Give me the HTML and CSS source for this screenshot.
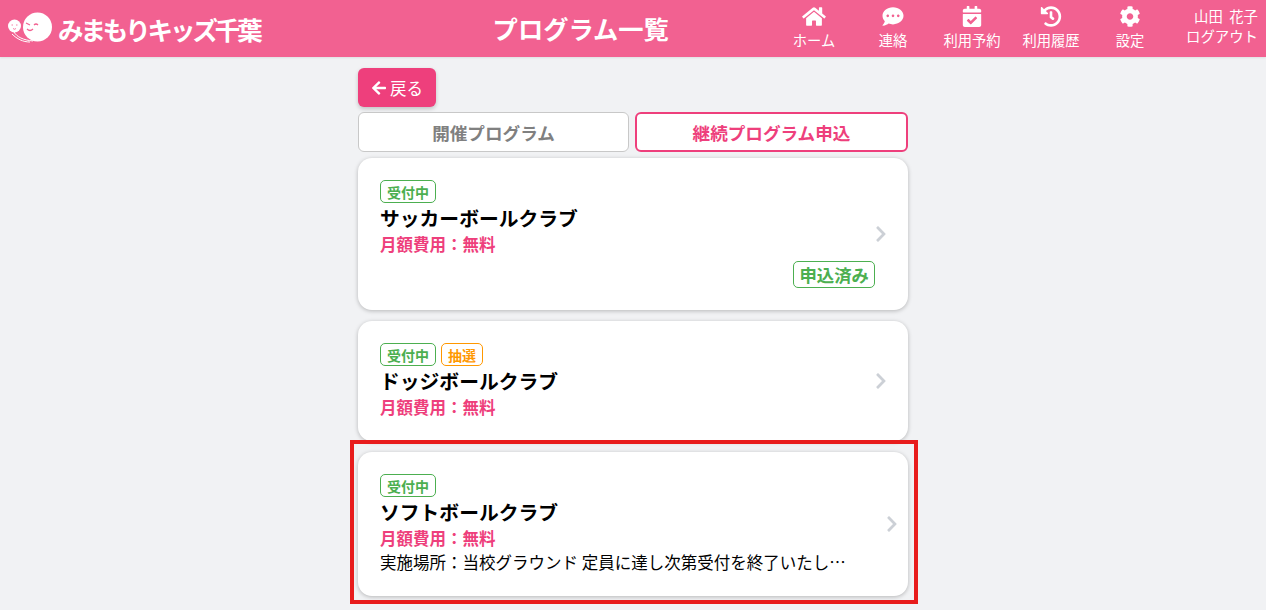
FILE: index.html
```html
<!DOCTYPE html>
<html lang="ja">
<head>
<meta charset="utf-8">
<title>プログラム一覧</title>
<link rel="stylesheet" href="styles.css">
</head>
<body>
<header class="topbar">
  <div class="brand">
    <svg class="mascot" viewBox="0 0 46 34" aria-hidden="true">
      <path class="mascot-line" d="M5 20 C8 25 14 28 24 29 M3 22 C8 27 14 30 21 30"/>
      <circle class="mascot-fill" cx="28.500" cy="15" r="14.500"/>
      <circle class="mascot-fill" cx="5.500" cy="14" r="6.500"/>
      <path class="mascot-face" d="M17 11 l4 2 M18 17 q3 3 6 0 M25 13 q2 -2 4 0"/>
      <path class="mascot-face-thin" d="M2.500 13 h1.500 M7 13 h1.500 M4 16.500 q1.500 1.500 3 0"/>
    </svg>
    <span class="brand-name">みまもりキッズ千葉</span>
  </div>
  <h1 class="page-title">プログラム一覧</h1>
  <nav class="nav">
    <a class="nav-item"><svg class="nav-icon" viewBox="0 0 576 512"><path d="M280.37 148.26L96 300.11V464a16 16 0 0 0 16 16l112.06-.29a16 16 0 0 0 15.92-16V368a16 16 0 0 1 16-16h64a16 16 0 0 1 16 16v95.64a16 16 0 0 0 16 16.05L464 480a16 16 0 0 0 16-16V300L295.67 148.26a12.19 12.19 0 0 0-15.3 0zM571.6 251.47L488 182.56V44.05a12 12 0 0 0-12-12h-56a12 12 0 0 0-12 12v72.61L318.47 43a48 48 0 0 0-61 0L4.34 251.47a12 12 0 0 0-1.6 16.9l25.5 31A12 12 0 0 0 45.15 301l235.22-193.74a12.19 12.19 0 0 1 15.3 0L530.9 301a12 12 0 0 0 16.9-1.6l25.5-31a12 12 0 0 0-1.7-16.93z"/></svg><span>ホーム</span></a>
    <a class="nav-item"><svg class="nav-icon" viewBox="0 0 512 512"><path d="M256 32C114.6 32 0 125.1 0 240c0 49.6 21.4 95 57 130.7C44.5 421.1 2.7 466 2.2 466.500c-2.2 2.3-2.8 5.700-1.500 8.700S4.800 480 8 480c66.300 0 116-31.800 140.600-51.400 32.700 12.300 69 19.400 107.400 19.400 141.400 0 256-93.100 256-208S397.400 32 256 32zM128 272c-17.700 0-32-14.300-32-32s14.300-32 32-32 32 14.300 32 32-14.300 32-32 32zm128 0c-17.700 0-32-14.300-32-32s14.300-32 32-32 32 14.300 32 32-14.300 32-32 32zm128 0c-17.700 0-32-14.300-32-32s14.300-32 32-32 32 14.300 32 32-14.300 32-32 32z"/></svg><span>連絡</span></a>
    <a class="nav-item"><svg class="nav-icon" viewBox="0 0 448 512"><path d="M436 160H12c-6.627 0-12-5.373-12-12v-36c0-26.510 21.490-48 48-48h48V12c0-6.627 5.373-12 12-12h40c6.627 0 12 5.373 12 12v52h128V12c0-6.627 5.373-12 12-12h40c6.627 0 12 5.373 12 12v52h48c26.510 0 48 21.490 48 48v36c0 6.627-5.373 12-12 12zM12 192h424c6.627 0 12 5.373 12 12v260c0 26.510-21.490 48-48 48H48c-26.510 0-48-21.490-48-48V204c0-6.627 5.373-12 12-12zm333.296 95.947l-28.169-28.398c-4.667-4.705-12.265-4.736-16.970-.068L194.120 364.665l-45.980-46.352c-4.667-4.705-12.266-4.736-16.971-.068l-28.397 28.170c-4.705 4.667-4.736 12.265-.068 16.970l82.601 83.269c4.667 4.705 12.265 4.736 16.970.068l142.953-141.805c4.705-4.667 4.736-12.265.068-16.970z"/></svg><span>利用予約</span></a>
    <a class="nav-item"><svg class="nav-icon" viewBox="0 0 512 512"><path d="M504 255.531c.253 136.640-111.180 248.372-247.820 248.468-59.015.042-113.223-20.530-155.822-54.911-11.077-8.940-11.905-25.541-1.839-35.607l11.267-11.267c8.609-8.609 22.353-9.551 31.891-1.984C173.062 425.135 212.781 440 256 440c101.705 0 184-82.311 184-184 0-101.705-82.311-184-184-184-48.814 0-93.149 18.969-126.068 49.932l50.754 50.754c10.080 10.080 2.941 27.314-11.313 27.314H24c-8.837 0-16-7.163-16-16V38.627c0-14.254 17.234-21.393 27.314-11.314l49.372 49.372C129.209 34.136 189.552 8 256 8c136.810 0 247.747 110.780 248 247.531zm-180.912 78.784l9.823-12.630c8.138-10.463 6.253-25.542-4.210-33.679L288 256.349V152c0-13.255-10.745-24-24-24h-16c-13.255 0-24 10.745-24 24v135.651l65.409 50.874c10.463 8.137 25.541 6.253 33.679-4.210z"/></svg><span>利用履歴</span></a>
    <a class="nav-item"><svg class="nav-icon" viewBox="0 0 512 512"><path d="M487.400 315.700l-42.600-24.600c4.300-23.200 4.300-47 0-70.200l42.600-24.600c4.900-2.800 7.100-8.600 5.500-14-11.100-35.600-30-67.800-54.700-94.600-3.800-4.100-10-5.100-14.800-2.300L380.800 110c-17.900-15.400-38.500-27.300-60.800-35.100V25.800c0-5.600-3.900-10.500-9.400-11.700-36.700-8.200-74.300-7.800-109.200 0-5.500 1.200-9.400 6.100-9.400 11.700V75c-22.200 7.900-42.800 19.800-60.800 35.100L88.700 85.500c-4.900-2.800-11-1.900-14.800 2.300-24.700 26.700-43.600 58.900-54.700 94.600-1.700 5.400.6 11.200 5.500 14L67.300 221c-4.300 23.200-4.300 47 0 70.200l-42.600 24.600c-4.900 2.800-7.100 8.600-5.500 14 11.100 35.600 30 67.800 54.700 94.600 3.800 4.100 10 5.100 14.800 2.300l42.600-24.600c17.900 15.400 38.500 27.300 60.800 35.100v49.200c0 5.600 3.900 10.500 9.400 11.700 36.700 8.200 74.300 7.800 109.200 0 5.500-1.200 9.400-6.100 9.400-11.700v-49.200c22.200-7.900 42.800-19.800 60.800-35.100l42.600 24.600c4.900 2.800 11 1.900 14.800-2.300 24.700-26.700 43.600-58.900 54.700-94.600 1.500-5.500-.7-11.300-5.600-14.100zM256 336c-44.100 0-80-35.900-80-80s35.900-80 80-80 80 35.900 80 80-35.900 80-80 80z"/></svg><span>設定</span></a>
  </nav>
  <div class="user">
    <span class="user-name">山田&nbsp;&nbsp;花子</span>
    <a class="logout">ログアウト</a>
  </div>
</header>
<main class="content">
  <a class="back"><svg class="back-icon" viewBox="0 0 448 512"><path d="M257.500 445.100l-22.200 22.200c-9.400 9.400-24.600 9.400-33.900 0L7 273c-9.400-9.400-9.400-24.600 0-33.900L201.400 44.700c9.400-9.400 24.600-9.400 33.900 0l22.200 22.200c9.500 9.500 9.300 25-.4 34.300L136.600 216H424c13.300 0 24 10.700 24 24v32c0 13.300-10.700 24-24 24H136.600l120.500 114.800c9.800 9.300 10 24.800.4 34.300z"/></svg>戻る</a>
  <div class="tabs">
    <a class="tab">開催プログラム</a>
    <a class="tab tab-active">継続プログラム申込</a>
  </div>
  <article class="card">
    <div class="card-body">
      <div class="tags"><span class="tag tag-green">受付中</span></div>
      <h2 class="name">サッカーボールクラブ</h2>
      <p class="fee">月額費用：無料</p>
      <div class="status-row"><span class="status">申込済み</span></div>
    </div>
    <svg class="chevron" viewBox="0 0 320 512"><path d="M285.476 272.971L91.132 467.314c-9.373 9.373-24.569 9.373-33.941 0l-22.667-22.667c-9.357-9.357-9.375-24.522-.04-33.901L188.505 256 34.484 101.255c-9.335-9.379-9.317-24.544.04-33.901l22.667-22.667c9.373-9.373 24.569-9.373 33.941 0L285.475 239.030c9.373 9.372 9.373 24.568.001 33.941z"/></svg>
  </article>
  <article class="card">
    <div class="card-body">
      <div class="tags"><span class="tag tag-green">受付中</span><span class="tag tag-orange">抽選</span></div>
      <h2 class="name">ドッジボールクラブ</h2>
      <p class="fee">月額費用：無料</p>
    </div>
    <svg class="chevron" viewBox="0 0 320 512"><path d="M285.476 272.971L91.132 467.314c-9.373 9.373-24.569 9.373-33.941 0l-22.667-22.667c-9.357-9.357-9.375-24.522-.04-33.901L188.505 256 34.484 101.255c-9.335-9.379-9.317-24.544.04-33.901l22.667-22.667c9.373-9.373 24.569-9.373 33.941 0L285.475 239.030c9.373 9.372 9.373 24.568.001 33.941z"/></svg>
  </article>
  <article class="card card-wide">
    <div class="card-body">
      <div class="tags"><span class="tag tag-green">受付中</span></div>
      <h2 class="name">ソフトボールクラブ</h2>
      <p class="fee">月額費用：無料</p>
      <p class="desc">実施場所：当校グラウンド 定員に達し次第受付を終了いたし…</p>
    </div>
    <svg class="chevron" viewBox="0 0 320 512"><path d="M285.476 272.971L91.132 467.314c-9.373 9.373-24.569 9.373-33.941 0l-22.667-22.667c-9.357-9.357-9.375-24.522-.04-33.901L188.505 256 34.484 101.255c-9.335-9.379-9.317-24.544.04-33.901l22.667-22.667c9.373-9.373 24.569-9.373 33.941 0L285.475 239.030c9.373 9.372 9.373 24.568.001 33.941z"/></svg>
    <div class="highlight"></div>
  </article>
</main>
</body>
</html>
```
FILE: styles.css
```css
* { box-sizing: border-box; }
html, body { height: 610px; overflow: hidden; }
body {
  margin: 0;
  background: #f1f2f4;
  color: #000;
  font-family: "Noto Sans CJK JP", "Noto Sans", sans-serif;
  font-size: 16.500px;
}
h1, h2, p { margin: 0; }

.topbar {
  display: flex;
  align-items: stretch;
  height: 57px;
  background: #f26191;
  color: #fff;
  box-shadow: 0 1px 2px rgba(0,0,0,.08);
}
.brand {
  display: flex;
  align-items: center;
  width: 387px;
  padding-left: 9px;
  flex: none;
}
.mascot { width: 46px; height: 34px; flex: none; overflow: visible; }
.mascot-fill { fill: #fff; }
.mascot-line { fill: none; stroke: #fff; stroke-width: 1; }
.mascot-face { fill: none; stroke: #f26191; stroke-width: 1.2; }
.mascot-face-thin { fill: none; stroke: #f26191; stroke-width: .8; }
.brand-name {
  margin-left: 3px;
  font-size: 25.500px;
  font-weight: 700;
  letter-spacing: -3.100px;
  line-height: 57px;
  white-space: nowrap;
}
.page-title {
  flex: 1;
  text-align: center;
  font-size: 25.300px;
  font-weight: 700;
  line-height: 57px;
}
.nav { display: flex; flex: none; }
.nav-item {
  width: 79px;
  display: flex;
  flex-direction: column;
  align-items: center;
  padding-top: 6px;
  font-size: 14.300px;
  line-height: 20px;
}
.nav-icon { height: 21px; width: 24px; fill: #fff; margin-bottom: 3px; }
.user {
  width: 96.500px;
  flex: none;
  display: flex;
  flex-direction: column;
  align-items: flex-end;
  padding: 6px 8px 0 0;
  font-size: 14.400px;
  line-height: 20px;
}

.content {
  width: 550px;
  margin: 0 auto;
  padding-top: 11px;
}
.back {
  display: inline-flex;
  align-items: center;
  gap: 4px;
  height: 39px;
  width: 78px;
  padding-left: 14px;
  background: #ee3f7c;
  color: #fff;
  border-radius: 6px;
  font-size: 16.500px;
  box-shadow: 0 2px 4px rgba(0,0,0,.2);
}
.back-icon { width: 14px; height: 16px; fill: #fff; }
.tabs {
  display: flex;
  gap: 6px;
  margin-top: 5px;
}
.tab {
  height: 40px;
  flex: 0 0 271px;
  display: flex;
  align-items: center;
  justify-content: center;
  background: #fff;
  border: 1px solid #c8c8c8;
  border-radius: 6px;
  color: #808080;
  font-size: 17.600px;
  font-weight: 700;
}
.tab-active {
  flex: 1;
  border: 2px solid #ee3f7c;
  color: #ee3f7c;
}
.card {
  position: relative;
  display: flex;
  align-items: center;
  background: #fff;
  border-radius: 14px;
  box-shadow: 0 1px 4px rgba(0,0,0,.25);
  padding: 22px 21px 22px 22px;
  margin-top: 11px;
}
.tabs + .card { margin-top: 6px; }
.card-wide { padding-right: 10px; }
.card-body { flex: 1; min-width: 0; }
.tags { display: flex; gap: 5px; }
.tag {
  height: 23px;
  padding: 0 6px;
  display: flex;
  align-items: center;
  border: 1px solid;
  border-radius: 5px;
  font-size: 14px;
  font-weight: 700;
  background: #fff;
}
.tag-green { color: #4caf50; border-color: #4caf50; }
.tag-orange { color: #ff9800; border-color: #ff9800; }
.name {
  font-size: 19.800px;
  font-weight: 700;
  line-height: 29px;
}
.fee {
  font-size: 16.500px;
  font-weight: 700;
  color: #ee3f7c;
  line-height: 24px;
  position: relative;
  top: .4px;
}
.status-row { display: flex; justify-content: flex-end; margin-top: 5px; }
.status {
  height: 27px;
  padding: 0 5px;
  display: flex;
  align-items: center;
  border: 1px solid #4caf50;
  border-radius: 5px;
  color: #4caf50;
  font-size: 17.400px;
  font-weight: 700;
}
.desc { font-size: 16.500px; line-height: 24px; white-space: nowrap; }
.chevron { width: 12px; height: 18px; fill: #ccd0d6; flex: none; margin-top: -1px; }
.highlight {
  position: absolute;
  top: -12px;
  right: -10px;
  bottom: -8px;
  left: -8px;
  border: 4px solid #e81c1c;
  pointer-events: none;
}
```
